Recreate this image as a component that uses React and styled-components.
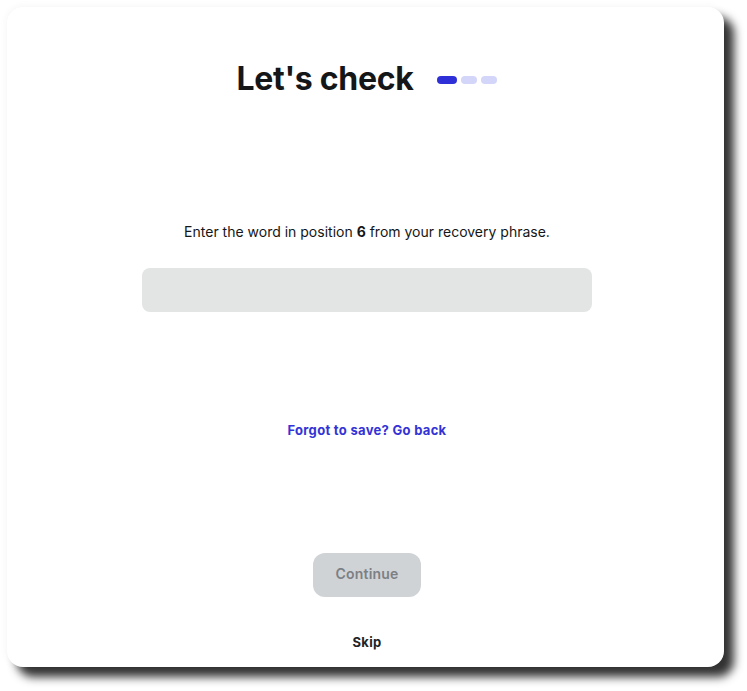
import React from "react";
import styled, { createGlobalStyle } from "styled-components";

const Global = createGlobalStyle`
  html, body { margin: 0; padding: 0; background: #ffffff; }
  body { font-family: Inter, "Noto Sans", sans-serif; }
  * { box-sizing: border-box; }
`;

const Page = styled.div`
  width: 747px;
  height: 691px;
  padding: 7px 23px 24px 7px;
`;

const Card = styled.div`
  width: 717px;
  height: 660px;
  background: #ffffff;
  border-radius: 16px;
  box-shadow: 0 0 8px rgba(0, 0, 0, 0.05), 10px 10px 10px rgba(0, 0, 0, 0.8);
  display: flex;
  flex-direction: column;
  align-items: center;
  padding-top: 52px;
  padding-left: 3px;
`;

const Header = styled.div`
  display: flex;
  align-items: center;
  gap: 24px;
  height: 40px;
`;

const Title = styled.h1`
  margin: 0;
  font-family: Inter, sans-serif;
  font-weight: 700;
  font-size: 32px;
  letter-spacing: -0.3px;
  line-height: 40px;
  color: #141617;
`;

const Steps = styled.div`
  display: flex;
  gap: 4px;
  margin-top: 2px;
`;

const Step = styled.span`
  display: block;
  height: 8px;
  width: ${(p) => (p.$active ? "20px" : "16px")};
  border-radius: 4px;
  background: ${(p) => (p.$active ? "#2f2fd8" : "#d3d5f9")};
`;

const Prompt = styled.p`
  margin: 123px 0 0;
  font-size: 14px;
  line-height: 20px;
  color: #141617;
  b { font-weight: 700; }
`;

const Input = styled.input`
  margin-top: 26px;
  width: 450px;
  height: 44px;
  border: none;
  border-radius: 8px;
  background: #e3e4e4;
  outline: none;
  padding: 0 14px;
  font-size: 14px;
`;

const Link = styled.a`
  margin-top: 108px;
  font-family: Inter, sans-serif;
  font-weight: 700;
  font-size: 13px;
  letter-spacing: 0.3px;
  line-height: 20px;
  color: #3333d6;
  text-decoration: none;
  cursor: pointer;
`;

const Button = styled.button`
  margin-top: 113px;
  width: 108px;
  height: 44px;
  border: none;
  border-radius: 12px;
  background: #d0d3d6;
  color: #7c8085;
  font-family: Inter, sans-serif;
  font-weight: 600;
  font-size: 14px;
  letter-spacing: 0.2px;
  line-height: 20px;
  padding: 0 0 2px;
`;

const Skip = styled.a`
  margin-top: 35px;
  font-family: Inter, sans-serif;
  font-weight: 700;
  font-size: 13px;
  letter-spacing: 0.3px;
  line-height: 20px;
  color: #222426;
  cursor: pointer;
`;

export default function App() {
  return (
    <>
      <Global />
      <Page>
        <Card>
          <Header>
            <Title>Let's check</Title>
            <Steps>
              <Step $active />
              <Step />
              <Step />
            </Steps>
          </Header>
          <Prompt>
            Enter the word in position <b>6</b> from your recovery phrase.
          </Prompt>
          <Input aria-label="Word" />
          <Link>Forgot to save? Go back</Link>
          <Button disabled>Continue</Button>
          <Skip>Skip</Skip>
        </Card>
      </Page>
    </>
  );
}
